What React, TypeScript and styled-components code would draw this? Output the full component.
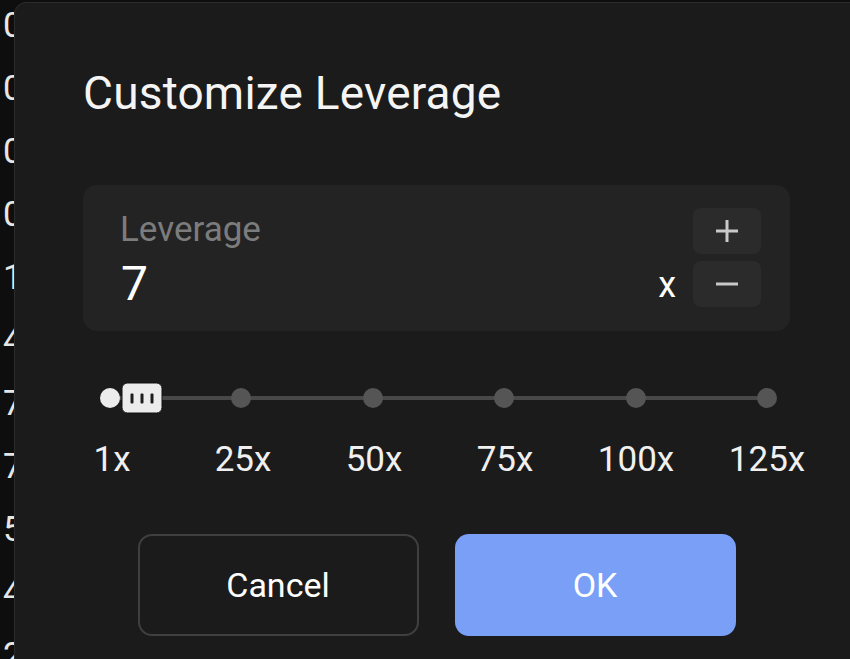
import { useState } from "react";
import styled, { createGlobalStyle } from "styled-components";

const GlobalStyle = createGlobalStyle`
  html, body {
    margin: 0;
    padding: 0;
    background: #0e0e0e;
    overflow: hidden;
  }
  body {
    font-family: Roboto, "Liberation Sans", sans-serif;
    color: #ffffff;
  }
`;

const Page = styled.div`
  display: flex;
  width: 850px;
  height: 659px;
  overflow: hidden;
`;

const BackList = styled.div`
  flex: 0 0 14px;
  overflow: hidden;
  margin-top: -6px;
  padding-left: 3px;
  box-sizing: border-box;
`;

const BackRow = styled.div`
  width: 11px;
  overflow: hidden;
  font-size: 35px;
  line-height: 63px;
  color: #e6e6e6;
`;

const Dialog = styled.div`
  flex: 0 0 848px;
  margin-top: 2px;
  height: 700px;
  box-sizing: border-box;
  background: #1b1b1b;
  border: 1px solid #2c2c2c;
  border-radius: 12px;
  padding: 66px 69px 0 68px;
  display: flex;
  flex-direction: column;
`;

const Title = styled.h2`
  margin: 0;
  font-size: 46px;
  line-height: 49px;
  font-weight: 400;
  color: #f4f4f4;
  letter-spacing: 0.2px;
`;

const InputBox = styled.div`
  margin-top: 67px;
  width: 707px;
  height: 146px;
  box-sizing: border-box;
  background: #232323;
  border-radius: 14px;
  padding: 23px 29px 24px 38px;
  display: flex;
`;

const Field = styled.div`
  flex: 1;
  display: flex;
  flex-direction: column;
`;

const Label = styled.div`
  font-size: 35px;
  line-height: 40px;
  color: #7c7c7c;
  margin: 2px 0 0 -1px;
`;

const Value = styled.div`
  margin-top: 8px;
  font-size: 48px;
  line-height: 52px;
  color: #ffffff;
`;

const Unit = styled.div`
  align-self: flex-end;
  margin: 0 17px 4px 0;
  font-size: 36px;
  line-height: 36px;
  color: #ffffff;
`;

const Stepper = styled.div`
  display: flex;
  flex-direction: column;
  gap: 7px;
`;

const StepButton = styled.button`
  width: 68px;
  height: 46px;
  border: none;
  border-radius: 8px;
  background: #2b2b2b;
  display: flex;
  align-items: center;
  justify-content: center;
  padding: 0;
  cursor: pointer;
`;

const SliderArea = styled.div`
  margin: 51px 0 0 17px;
  width: 677px;
  height: 32px;
  position: relative;
  display: flex;
  align-items: center;
  justify-content: space-between;

  &::before {
    content: "";
    position: absolute;
    left: 10px;
    right: 10px;
    top: 14px;
    height: 4px;
    background: #484848;
  }
`;

const Dot = styled.span<{ $active?: boolean }>`
  position: relative;
  width: 20px;
  height: 20px;
  border-radius: 50%;
  background: ${(p) => (p.$active ? "#ececec" : "#555555")};
`;

const Handle = styled.div`
  position: absolute;
  top: 50%;
  width: 41px;
  height: 31px;
  box-sizing: border-box;
  transform: translate(-50%, -50%);
  background: #ececec;
  border: 1px solid #111111;
  border-radius: 6px;
  display: flex;
  align-items: center;
  justify-content: center;
  gap: 7px;
`;

const Grip = styled.span`
  width: 3px;
  height: 10px;
  background: #1e1e1e;
  border-radius: 1px;
`;

const Marks = styled.div`
  margin: 26px 0 0 -11px;
  width: 735px;
  display: flex;
  justify-content: space-between;
`;

const Mark = styled.span`
  width: 80px;
  text-align: center;
  font-size: 35px;
  line-height: 40px;
  color: #f0f0f0;
`;

const Actions = styled.div`
  margin-top: 54px;
  width: 707px;
  display: flex;
  justify-content: center;
  gap: 36px;
`;

const ActionButton = styled.button<{ $primary?: boolean }>`
  width: 281px;
  height: 102px;
  box-sizing: border-box;
  border-radius: 14px;
  font-family: Roboto, "Liberation Sans", sans-serif;
  font-size: 34px;
  font-weight: 400;
  color: #ffffff;
  cursor: pointer;
  border: ${(p) => (p.$primary ? "none" : "2px solid #3f3f3f")};
  background: ${(p) => (p.$primary ? "#7a9ff6" : "#1b1b1b")};
`;

const backDigits = ["0", "0", "0", "0", "1", "4", "7", "7", "5", "4", "2"];
const marks = [1, 25, 50, 75, 100, 125];
const MIN = 1;
const MAX = 125;

function PlusIcon() {
  return (
    <svg width="26" height="26" viewBox="0 0 26 26">
      <path d="M13 2v22M2 13h22" stroke="#c9c9c9" strokeWidth="3" />
    </svg>
  );
}

function MinusIcon() {
  return (
    <svg width="26" height="26" viewBox="0 0 26 26">
      <path d="M2 13h22" stroke="#c9c9c9" strokeWidth="3" />
    </svg>
  );
}

export default function App() {
  const [leverage, setLeverage] = useState(7);
  const trackWidth = 657;
  const handleLeft = 10 + ((leverage - MIN) / (MAX - MIN)) * trackWidth;

  return (
    <>
      <GlobalStyle />
      <Page>
        <BackList>
          {backDigits.map((d, i) => (
            <BackRow key={i}>{d}</BackRow>
          ))}
        </BackList>
        <Dialog>
          <Title>Customize Leverage</Title>
          <InputBox>
            <Field>
              <Label>Leverage</Label>
              <Value>{leverage}</Value>
            </Field>
            <Unit>x</Unit>
            <Stepper>
              <StepButton onClick={() => setLeverage(Math.min(MAX, leverage + 1))}>
                <PlusIcon />
              </StepButton>
              <StepButton onClick={() => setLeverage(Math.max(MIN, leverage - 1))}>
                <MinusIcon />
              </StepButton>
            </Stepper>
          </InputBox>
          <SliderArea>
            {marks.map((m) => (
              <Dot key={m} $active={m <= leverage} />
            ))}
            <Handle style={{ left: handleLeft }}>
              <Grip />
              <Grip />
              <Grip />
            </Handle>
          </SliderArea>
          <Marks>
            {marks.map((m) => (
              <Mark key={m}>{m}x</Mark>
            ))}
          </Marks>
          <Actions>
            <ActionButton>Cancel</ActionButton>
            <ActionButton $primary>OK</ActionButton>
          </Actions>
        </Dialog>
      </Page>
    </>
  );
}
